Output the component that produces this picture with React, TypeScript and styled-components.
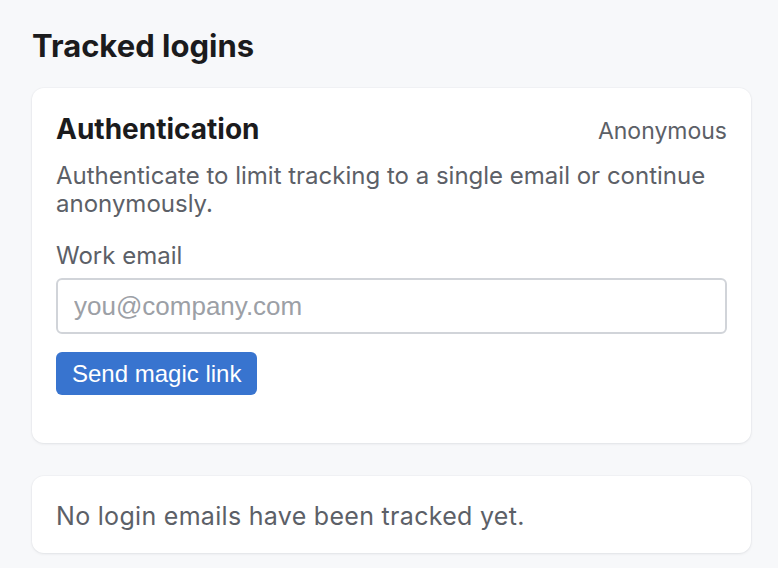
import React, { FC } from 'react';
import styled, { createGlobalStyle } from 'styled-components';

const GlobalStyle = createGlobalStyle`
  html, body {
    margin: 0;
    padding: 0;
    background: #f7f8fa;
  }
  body {
    font-family: Inter, "Noto Sans", sans-serif;
    color: #1c1c1e;
  }
`;

const Page = styled.div`
  padding: 26px 27px 14px 32px;
  display: flex;
  flex-direction: column;
`;

const Title = styled.h1`
  margin: 0 0 22px 0;
  font-size: 31px;
  font-weight: 700;
  line-height: 40px;
  color: #1b1b1d;
`;

const Card = styled.section<{ $pad?: string }>`
  background: #fff;
  border-radius: 12px;
  box-shadow: 0 1px 3px rgba(16, 24, 40, 0.08), 0 0 0 1px rgba(16, 24, 40, 0.02);
  padding: ${(p) => p.$pad || '24px'};
  & + & {
    margin-top: 33px;
  }
`;

const CardHeader = styled.div`
  display: flex;
  justify-content: space-between;
  align-items: baseline;
`;

const CardTitle = styled.h2`
  margin: 0;
  font-size: 28px;
  font-weight: 700;
  line-height: 32px;
  color: #1b1b1d;
  padding-top: 1px;
`;

const Status = styled.span`
  font-size: 23px;
  color: #5c6067;
`;

const Description = styled.p`
  margin: 17px 0 0;
  font-size: 24px;
  line-height: 28px;
  color: #5c6067;
`;

const EmptyText = styled.p`
  margin: 0;
  font-size: 25px;
  line-height: 30px;
  letter-spacing: 0.3px;
  color: #5c6067;
`;

const Field = styled.label`
  display: flex;
  flex-direction: column;
  gap: 8px;
  margin-top: 24px;
  font-size: 24px;
  line-height: 28px;
  color: #5c6067;
`;

const Input = styled.input`
  box-sizing: border-box;
  height: 56px;
  width: 100%;
  padding: 0 16px;
  border: 2px solid #d1d4d9;
  border-radius: 6px;
  font-family: "Liberation Sans", Arial, sans-serif;
  font-size: 26px;
  color: #1b1b1d;
  outline: none;
  &::placeholder {
    color: #9ca0a6;
  }
`;

const Button = styled.button`
  align-self: flex-start;
  margin-top: 18px;
  height: 43px;
  padding: 0 16px;
  border: none;
  border-radius: 6px;
  background: #3874cf;
  color: #fff;
  font-family: "Liberation Sans", Arial, sans-serif;
  font-size: 24px;
  cursor: pointer;
`;

const Form = styled.div`
  display: flex;
  flex-direction: column;
  padding-bottom: 24px;
`;

const App: FC = () => {
  return (
    <>
      <GlobalStyle />
      <Page>
        <Title>Tracked logins</Title>
        <Card>
          <CardHeader>
            <CardTitle>Authentication</CardTitle>
            <Status>Anonymous</Status>
          </CardHeader>
          <Description>
            Authenticate to limit tracking to a single email or continue anonymously.
          </Description>
          <Form>
            <Field>
              Work email
              <Input type="email" placeholder="you@company.com" />
            </Field>
            <Button>Send magic link</Button>
          </Form>
        </Card>
        <Card $pad="25px 24px 22px">
          <EmptyText>No login emails have been tracked yet.</EmptyText>
        </Card>
      </Page>
    </>
  );
};

export default App;
